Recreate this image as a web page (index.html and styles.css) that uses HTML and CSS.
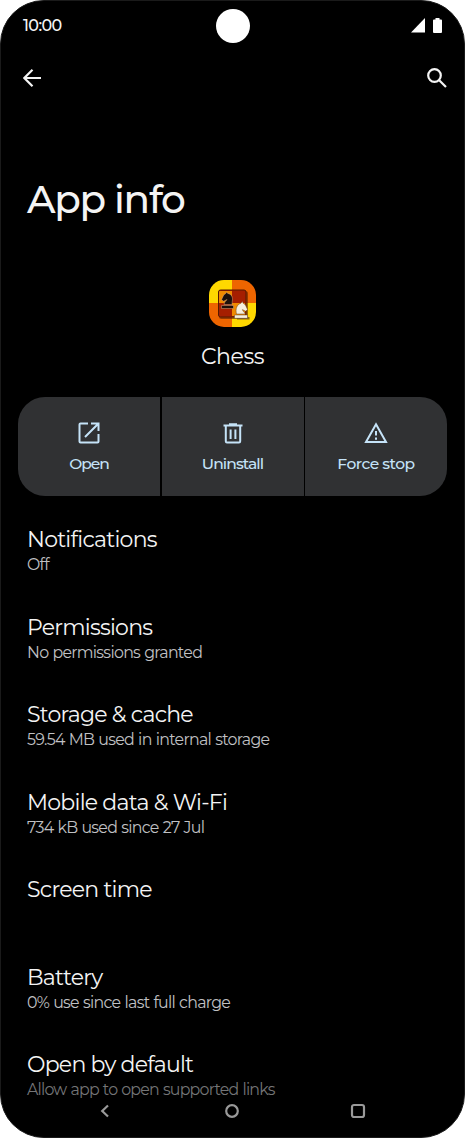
FILE: index.html
```html
<!DOCTYPE html>
<html lang="en">
<head>
  <meta charset="UTF-8" />
  <meta name="viewport" content="width=device-width, initial-scale=1.0"/>
  <title>App info</title>
  <link rel="stylesheet" href="styles.css">
</head>
<body>
  <div class="screen">
    <header class="status-bar">
      <span class="clock">10:00</span>
      <span class="camera"></span>
      <span class="status-icons">
        <svg width="14" height="15" viewBox="0 0 14 15"><path d="M14 0v14.5H0z"/></svg>
        <svg width="9" height="15" viewBox="0 0 9 15"><path d="M2.500 0h4v1.500H8a1 1 0 0 1 1 1V14a1 1 0 0 1-1 1H1a1 1 0 0 1-1-1V2.500a1 1 0 0 1 1-1h1.500z"/></svg>
      </span>
    </header>

    <nav class="app-bar">
      <svg class="back" width="18" height="18" viewBox="0 0 18 18"><path d="M18 9H1.500M9.500 .8L1.300 9l8.200 8.200"/></svg>
      <svg class="search" width="20" height="20" viewBox="0 0 20 20"><circle cx="7.500" cy="7.500" r="6.300"/><path d="M12 12l7 7"/></svg>
    </nav>

    <h1>App info</h1>

    <section class="app">
      <svg class="app-icon" width="47" height="47" viewBox="0 0 47 47">
        <defs>
          <clipPath id="round"><rect width="47" height="47" rx="15"/></clipPath>
        </defs>
        <g clip-path="url(#round)">
          <path fill="#ffd800" d="M0 0h23v23H0zM23 23h24v24H23z"/>
          <path fill="#ee6500" d="M23 0h24v23H23zM0 23h23v24H0z"/>
        </g>
        <rect x="10" y="11" width="29" height="28" rx="2.500" fill="#5c1c00" opacity=".6"/>
        <rect x="9.500" y="10" width="27.500" height="27" rx="2" fill="#a51e00"/>
        <path fill="#f08a00" d="M10 11h13v12H10zM23 23h13v13H23z"/>
        <rect x="9.500" y="10" width="27.500" height="27" rx="2" fill="none" stroke="#541900"/>
        <!-- black knight -->
        <path fill="#1c100b" stroke="#d9a77c" stroke-width=".5" d="M12.500 25.500h12v3h-12zM15 24.500c.4-2.600 2-3.500 3-5l-3.300 1.800-2.200-1.600 2.200-4.700 2-1.500.8-1.300 1.400 1.200c3.700.8 5.200 3.800 4.400 7.800l-.3 3.300z"/>
        <!-- white knight -->
        <path fill="#3a1a05" opacity=".6" d="M28 37h12.500v2.500H28z"/>
        <path fill="#f6efdd" stroke="#6b4724" stroke-width=".5" d="M25.500 35h13v3.300h-13zM27.500 34c-1.200-5 .2-9.500 4.500-10.800l1.300-1.600 1 1.800 2 1.300 2.200 4.800-1.800 1.700-3.300-1.600c.3 2 2.400 2.600 2.800 4.400z"/>
      </svg>
      <div class="app-name">Chess</div>
    </section>

    <div class="actions">
      <div class="action">
        <svg width="24" height="24" viewBox="0 0 24 24"><path d="M11 2.500H3.500a1 1 0 0 0-1 1v17a1 1 0 0 0 1 1h17a1 1 0 0 0 1-1V13M14 2.500h7.500V10M21 3L8 16"/></svg>
        <span class="open">Open</span>
      </div>
      <div class="action">
        <svg width="24" height="24" viewBox="0 0 24 24"><path d="M2.500 4.500h19M8 3.200h8M4.800 5v15.300a1.200 1.200 0 0 0 1.200 1.200h12a1.200 1.200 0 0 0 1.200-1.200V5M9.600 8.500v9.500M14.400 8.500v9.500"/></svg>
        <span class="uninstall">Uninstall</span>
      </div>
      <div class="action">
        <svg width="24" height="24" viewBox="0 0 24 24"><path d="M12 3.200L22 21H2zM12 10v4.500M12 16.500v2.200"/></svg>
        <span class="force-stop">Force stop</span>
      </div>
    </div>

    <ul class="settings">
      <li>
        <h2>Notifications</h2>
        <p>Off</p>
      </li>
      <li>
        <h2>Permissions</h2>
        <p>No permissions granted</p>
      </li>
      <li>
        <h2>Storage &amp; cache</h2>
        <p>59.54 MB used in internal storage</p>
      </li>
      <li>
        <h2>Mobile data &amp; Wi-Fi</h2>
        <p>734 kB used since 27 Jul</p>
      </li>
      <li>
        <h2>Screen time</h2>
      </li>
      <li>
        <h2>Battery</h2>
        <p>0% use since last full charge</p>
      </li>
      <li class="disabled">
        <h2>Open by default</h2>
        <p>Allow app to open supported links</p>
      </li>
    </ul>

    <footer class="nav-bar">
      <svg width="16" height="16" viewBox="0 0 16 16"><path d="M11 2.500L5.200 8l5.800 5.500"/></svg>
      <svg width="16" height="16" viewBox="0 0 16 16"><circle cx="8" cy="8" r="5.800"/></svg>
      <svg width="16" height="16" viewBox="0 0 16 16"><rect x="2" y="2" width="12" height="12" rx="2"/></svg>
    </footer>
  </div>
</body>
</html>
```

FILE: styles.css
```css
* {
  box-sizing: border-box;
}
body {
  margin: 0;
  background: #fff;
  font-family: Montserrat, Inter, sans-serif;
}
svg {
  display: block;
}
.screen {
  position: relative;
  height: 1138px;
  overflow: hidden;
  background: #000;
  border: 1px solid #1a1a1a;
  border-radius: 44px;
  color: #f4f4f4;
}
.status-bar {
  height: 49px;
  padding: 0 22px;
  display: grid;
  grid-template-columns: 1fr 34px 1fr;
  align-items: center;
}
.clock {
  font-size: 16px;
  font-weight: 500;
  letter-spacing: -0.6px;
}
.camera {
  width: 34px;
  height: 34px;
  border-radius: 50%;
  background: #fff;
}
.status-icons {
  display: flex;
  justify-content: flex-end;
  gap: 8px;
  fill: #fff;
}
.app-bar {
  height: 56px;
  padding: 0 17px 0 22px;
  display: flex;
  justify-content: space-between;
  align-items: center;
  fill: none;
  stroke: #f4f4f4;
  stroke-width: 2.2;
}
h1 {
  margin: 68px 26px 0;
  font-size: 39px;
  line-height: 50px;
  font-weight: 500;
  letter-spacing: -1.3px;
}
.app {
  margin-top: 56px;
  display: flex;
  flex-direction: column;
  align-items: center;
}
.app-name {
  margin-top: 15px;
  font-size: 22px;
  line-height: 30px;
  letter-spacing: -0.4px;
}
.actions {
  height: 99px;
  margin: 25px 17px 0;
  display: grid;
  grid-template-columns: repeat(3, 1fr);
  gap: 1.5px;
  border-radius: 27px;
  overflow: hidden;
}
.action {
  padding-top: 24px;
  display: flex;
  flex-direction: column;
  align-items: center;
  gap: 9px;
  background: #303133;
  color: #c5e3f8;
  font-size: 15.5px;
  line-height: 20px;
  font-weight: 500;
}
.open {
  letter-spacing: -1px;
}
.uninstall {
  letter-spacing: -0.9px;
}
.force-stop {
  letter-spacing: -0.5px;
}
.action svg {
  fill: none;
  stroke: #c5e3f8;
  stroke-width: 2;
}
.settings {
  margin: 30px 26px 0;
  padding: 0;
  list-style: none;
}
.settings li {
  height: 87.5px;
}
h2 {
  margin: 0;
  font-size: 22px;
  line-height: 28px;
  font-weight: 400;
  letter-spacing: -0.75px;
}
.settings p {
  margin: 0;
  font-size: 15.8px;
  line-height: 22px;
  letter-spacing: -0.7px;
  word-spacing: 0.6px;
  color: #c0c1c4;
}
.settings .disabled p {
  letter-spacing: -0.78px;
  color: #747577;
}
.nav-bar {
  position: absolute;
  left: 96px;
  right: 98px;
  bottom: 18px;
  display: flex;
  justify-content: space-between;
  fill: none;
  stroke: #999;
  stroke-width: 2.2;
}
```
